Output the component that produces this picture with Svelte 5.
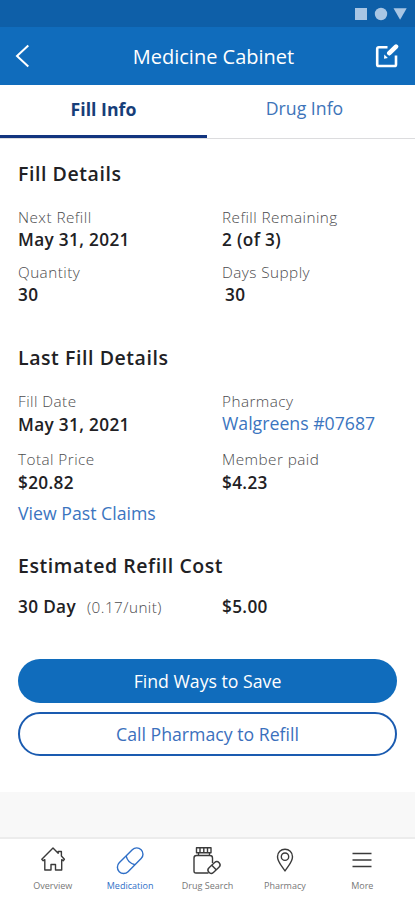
<script>
  const fillDetails = [
    { label: 'Next Refill', value: 'May 31, 2021' },
    { label: 'Refill Remaining', value: '2 (of 3)' },
    { label: 'Quantity', value: '30' },
    { label: 'Days Supply', value: '30', indent: true },
  ];

  const lastFill = [
    { label: 'Fill Date', value: 'May 31, 2021' },
    { label: 'Pharmacy', value: 'Walgreens #07687', link: true },
    { label: 'Total Price', value: '$20.82' },
    { label: 'Member paid', value: '$4.23' },
  ];

  const navItems = ['Overview', 'Medication', 'Drug Search', 'Pharmacy', 'More'];
  let activeNav = 'Medication';
  let tab = 'fill';
</script>

<div class="screen">
  <div class="status">
    <svg width="54" height="16" viewBox="0 0 54 16" fill="#a9c6e4">
      <rect x="1" y="2" width="12" height="12" />
      <circle cx="27" cy="8" r="6.2" />
      <path d="M39.5 2.3h13.2L46.1 13.8z" />
    </svg>
  </div>

  <header>
    <button class="icon-btn" aria-label="Back">
      <svg width="16" height="24" viewBox="0 0 16 24" fill="none" stroke="#fff" stroke-width="2">
        <path d="M14.3 1.5L3 12l11.3 10.5" />
      </svg>
    </button>
    <h1>Medicine Cabinet</h1>
    <button class="icon-btn" aria-label="Edit">
      <svg width="24" height="26" viewBox="0 0 24 26" fill="none" stroke="#fff" stroke-linejoin="round">
        <path d="M12.500 4.2H3.8Q2.2 4.2 2.2 5.8V21.4Q2.2 23 3.8 23H19.4Q21 23 21 21.4V12.5" stroke-width="2.6" />
        <path d="M14.3 10.2L21 3.6" stroke-width="4.6" stroke-linecap="round" />
        <path d="M9.300 11.500l3.600 3.500-3.900 .8z" fill="#fff" stroke="none" />
      </svg>
    </button>
  </header>

  <div class="tabs">
    <button class="tab" class:active={tab === 'fill'} on:click={() => (tab = 'fill')}>Fill Info</button>
    <button class="tab drug" class:active={tab === 'drug'} on:click={() => (tab = 'drug')}>Drug Info</button>
  </div>

  <main>
    <h2>Fill Details</h2>
    <div class="grid">
      {#each fillDetails as item}
        <div class="field">
          <span class="label">{item.label}</span>
          <span class="value" class:indent={item.indent}>{item.value}</span>
        </div>
      {/each}
    </div>

    <h2 class="last">Last Fill Details</h2>
    <div class="grid last-grid">
      {#each lastFill as item}
        <div class="field">
          <span class="label">{item.label}</span>
          {#if item.link}
            <a class="link" href="#pharmacy">{item.value}</a>
          {:else}
            <span class="value">{item.value}</span>
          {/if}
        </div>
      {/each}
    </div>
    <a class="link claims" href="#claims">View Past Claims</a>

    <h2 class="cost">Estimated Refill Cost</h2>
    <div class="grid">
      <div class="days"><span class="value">30 Day</span><span class="unit">(0.17/unit)</span></div>
      <span class="value">$5.00</span>
    </div>

    <div class="actions">
      <button class="primary">Find Ways to Save</button>
      <button class="secondary">Call Pharmacy to Refill</button>
    </div>
  </main>

  <div class="spacer"></div>

  <nav>
    {#each navItems as name}
      <button class="nav-item" class:current={name === activeNav} on:click={() => (activeNav = name)}>
        <svg width="32" height="30" viewBox="0 0 32 30" fill="none" stroke="currentColor" stroke-width="1.4" stroke-linejoin="round">
          {#if name === 'Overview'}
            <path d="M16 2L4.800 13.200l1.400 1.500 1.600-1V24h6.200v-5.500h4.500v5.500h6.200V13.700l1.500 1 1.200-1.500-3-3.200V5.500h-3.200v1.700z" />
          {:else if name === 'Medication'}
            <g transform="rotate(-45 16 14.5)">
              <rect x="0.5" y="8.5" width="31" height="12.5" rx="6.25" />
              <path d="M16.500 8.500c-2.500 4-2.500 8.500 0 12.500" />
            </g>
          {:else if name === 'Drug Search'}
            <path d="M5.500 1.800h14.500v5h-14.500zM9 1.800v5M12.800 1.800v5M16.500 1.800v5M7.500 6.800v3M18.500 6.800v3M17.500 27H5q-2 0-2-2V12q0-2.500 2.500-2.500h13.500q2.500 0 2.500 2.500v5" />
            <g transform="rotate(-43 23 21.5)">
              <rect x="16" y="18.3" width="14" height="6.4" rx="3.2" />
              <path d="M23 18.3v6.4" />
            </g>
          {:else if name === 'Pharmacy'}
            <path d="M16 25C13 20 8.500 16 8.500 10.700C8.500 6 12 3.200 16 3.200S23.500 6 23.500 10.700C23.500 16 19 20 16 25z" />
            <circle cx="16" cy="10.7" r="3.7" />
          {:else}
            <path d="M6.500 7.500h19M6.500 14h19M6.500 20.500h19" stroke-width="1.6" />
          {/if}
        </svg>
        <span>{name}</span>
      </button>
    {/each}
  </nav>
</div>

<style>
  :global(body) {
    margin: 0;
    background: #fff;
  }
  .screen {
    width: 415px;
    height: 900px;
    display: flex;
    flex-direction: column;
    overflow: hidden;
    font-family: 'Open Sans', sans-serif;
    color: #212124;
  }
  button {
    font-family: inherit;
    border: none;
    background: none;
    padding: 0;
    margin: 0;
  }
  .status {
    height: 27px;
    box-sizing: border-box;
    padding: 6px 7px 0 0;
    background: #0e5fa8;
    display: flex;
    justify-content: flex-end;
  }
  header {
    height: 58px;
    box-sizing: border-box;
    padding: 0 16px 0 14px;
    background: #106cbc;
    display: flex;
    align-items: center;
    justify-content: space-between;
  }
  .icon-btn {
    width: 24px;
    height: 26px;
    display: flex;
    align-items: center;
  }
  h1 {
    margin: 0;
    padding-left: 14px;
    color: #fff;
    font-size: 20px;
    font-weight: 400;
  }
  .tabs {
    height: 54px;
    box-sizing: border-box;
    border-bottom: 1px solid #dcdcde;
    display: flex;
  }
  .tab {
    width: 207px;
    height: 53px;
    box-sizing: border-box;
    padding-bottom: 2px;
    border-bottom: 3px solid transparent;
    color: #3d74b9;
    font-size: 17.7px;
  }
  .tab.drug {
    padding-right: 12px;
    padding-bottom: 4px;
  }
  .tab.active {
    color: #173e79;
    font-weight: 700;
    border-color: #12357f;
  }
  main {
    height: 653px;
    box-sizing: border-box;
    padding: 22px 18px 0;
  }
  h2 {
    margin: 0 0 19px;
    font-size: 19.5px;
    line-height: 26px;
    font-weight: 600;
    letter-spacing: 0.57px;
  }
  .last {
    margin-top: 38px;
  }
  .cost {
    margin: 29px 0 16px;
  }
  .grid {
    display: grid;
    grid-template-columns: 204px 1fr;
    row-gap: 9px;
  }
  .last-grid {
    row-gap: 11px;
  }
  .field {
    display: flex;
    flex-direction: column;
  }
  .label {
    color: #4c4c4e;
    font-size: 15.3px;
    line-height: 22px;
    font-weight: 300;
    letter-spacing: 0.45px;
  }
  .value {
    font-size: 17.2px;
    line-height: 24px;
    font-weight: 600;
    letter-spacing: 0.35px;
  }
  .last-grid .value {
    line-height: 25px;
  }
  .indent {
    padding-left: 3px;
  }
  .link {
    color: #3b75bf;
    font-size: 17.7px;
    line-height: 22px;
    text-decoration: none;
  }
  .claims {
    display: block;
    margin-top: 7px;
  }
  .unit {
    margin-left: 11px;
    color: #4c4c4e;
    font-size: 15.3px;
    font-weight: 300;
    letter-spacing: 0.45px;
  }
  .days {
    height: 24px;
    line-height: 24px;
  }
  .actions {
    margin-top: 40px;
    display: flex;
    flex-direction: column;
    gap: 9px;
  }
  .actions button {
    height: 44px;
    border-radius: 22px;
    font-size: 17.7px;
  }
  .primary {
    background: #106cbc;
    color: #fff;
  }
  .actions .secondary {
    border: 2px solid #1a5bb0;
    color: #3b70bd;
  }
  .spacer {
    height: 45px;
    background: #f8f8f8;
  }
  nav {
    flex: 1;
    border-top: 2px solid #ececec;
    padding: 0 14px;
    display: grid;
    grid-template-columns: repeat(5, 1fr);
  }
  .nav-item {
    display: flex;
    flex-direction: column;
    align-items: center;
    padding-top: 7px;
    color: #3a3a3a;
  }
  .nav-item span {
    margin-top: 4px;
    font-size: 9px;
    line-height: 12px;
    color: #777;
  }
  .nav-item.current,
  .nav-item.current span {
    color: #2f6fc7;
  }
</style>
